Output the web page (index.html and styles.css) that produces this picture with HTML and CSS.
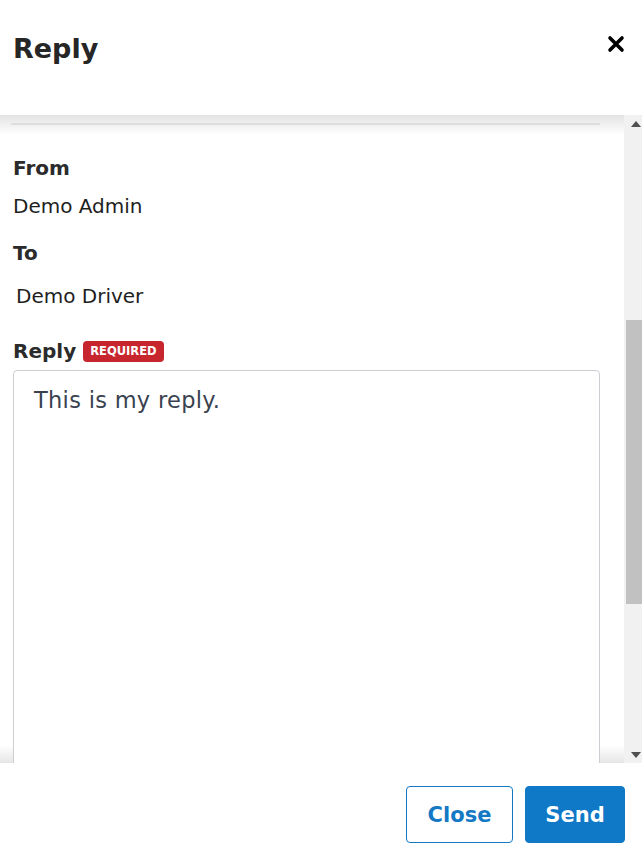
FILE: index.html
```html
<!DOCTYPE html>
<html lang="en">
<head>
    <meta charset="UTF-8">
    <meta name="viewport" content="width=device-width, initial-scale=1.0">
    <title>Reply</title>
    <link rel="stylesheet" href="styles.css">
</head>
<body>
    <div class="modal">
        <div class="modal-header">
            <h1>Reply</h1>
            <button class="close-icon" aria-label="Close">
                <svg width="18" height="18" viewBox="0 0 18 18">
                    <path d="M3 3 L15 15 M15 3 L3 15" stroke="#000" stroke-width="3.6" stroke-linecap="round"/>
                </svg>
            </button>
        </div>

        <div class="modal-body">
            <div class="modal-content">
                <hr class="divider">

                <div class="field field-from">
                    <label>From</label>
                    <div class="value">Demo Admin</div>
                </div>

                <div class="field field-to">
                    <label>To</label>
                    <div class="value indent">Demo Driver</div>
                </div>

                <div class="field field-reply">
                    <div class="label-row">
                        <label for="reply">Reply</label>
                        <span class="badge">Required</span>
                    </div>
                    <textarea id="reply">This is my reply.</textarea>
                </div>
            </div>

            <div class="scrollbar">
                <div class="arrow arrow-up"></div>
                <div class="track">
                    <div class="thumb"></div>
                </div>
                <div class="arrow arrow-down"></div>
            </div>
        </div>

        <div class="modal-footer">
            <button class="btn btn-outline">Close</button>
            <button class="btn btn-primary">Send</button>
        </div>
    </div>
</body>
</html>
```

FILE: styles.css
```css
html, body {
    margin: 0;
    padding: 0;
    height: 100%;
}

body {
    font-family: 'DejaVu Sans', Verdana, sans-serif;
    color: #222;
    background-color: #fff;
}

.modal {
    display: flex;
    flex-direction: column;
    height: 100vh;
}

.modal-header {
    height: 115px;
    box-sizing: border-box;
    padding: 33px 17px 0 13px;
    display: flex;
    justify-content: space-between;
    align-items: flex-start;
}

.modal-header h1 {
    margin: 0;
    font-size: 27px;
    line-height: 32px;
    font-weight: bold;
    color: #262626;
}

.close-icon {
    background: none;
    border: none;
    padding: 0;
    margin-top: 2px;
    cursor: pointer;
    line-height: 0;
}

.modal-body {
    flex: 1;
    display: flex;
    min-height: 0;
}

.modal-content {
    flex: 1;
    overflow: hidden;
    padding: 0 24px 0 13px;
    background: linear-gradient(#e3e3e3, #fff 20px, #fff calc(100% - 18px), #e6e6e6);
}

.divider {
    margin: 8px 0 0 -2px;
    border: none;
    height: 2px;
    background-color: #dedede;
}

.field label {
    display: block;
    font-size: 20px;
    line-height: 24px;
    font-weight: bold;
    color: #2b2b2b;
}

.value {
    font-size: 20px;
    line-height: 24px;
    color: #1e1e1e;
}

.value.indent {
    margin-left: 3px;
}

.field-from {
    margin-top: 31px;
}

.field-from .value {
    margin-top: 14px;
}

.field-to {
    margin-top: 23px;
}

.field-to .value {
    margin-top: 19px;
}

.field-reply {
    margin-top: 31px;
}

.label-row {
    display: flex;
    align-items: center;
    gap: 7px;
}

.badge {
    display: inline-block;
    background-color: #c8262f;
    color: #fff;
    font-size: 11.5px;
    font-weight: bold;
    text-transform: uppercase;
    line-height: 21px;
    padding: 0 7px;
    border-radius: 4px;
}

textarea {
    display: block;
    box-sizing: border-box;
    width: 100%;
    height: 420px;
    margin-top: 7px;
    padding: 14px 20px;
    border: 1px solid #cbcfd4;
    border-radius: 4px;
    font-family: inherit;
    font-size: 22.5px;
    line-height: 30px;
    letter-spacing: 0.3px;
    color: #3a4250;
    background-color: #fff;
    resize: none;
}

.scrollbar {
    width: 18px;
    background-color: #f1f1f1;
    display: flex;
    flex-direction: column;
}

.arrow {
    height: 17px;
    display: flex;
    justify-content: flex-end;
    align-items: center;
}

.arrow-up::before {
    content: "";
    margin-right: 1px;
    border-left: 5px solid transparent;
    border-right: 5px solid transparent;
    border-bottom: 6px solid #505050;
}

.arrow-down::before {
    content: "";
    margin-right: 1px;
    border-left: 5px solid transparent;
    border-right: 5px solid transparent;
    border-top: 6px solid #505050;
}

.track {
    flex: 1;
}

.thumb {
    margin: 188px 0 0 2px;
    height: 284px;
    background-color: #c1c1c1;
}

.modal-footer {
    height: 103px;
    box-sizing: border-box;
    padding: 23px 17px 0 0;
    display: flex;
    justify-content: flex-end;
    align-items: flex-start;
    gap: 12px;
}

.btn {
    font-family: inherit;
    font-size: 21px;
    font-weight: bold;
    height: 57px;
    border-radius: 4px;
    cursor: pointer;
}

.btn-outline {
    width: 107px;
    background-color: #fff;
    color: #1479c4;
    border: 1px solid #1479c4;
}

.btn-primary {
    width: 100px;
    background-color: #0f78c7;
    color: #fff;
    border: 1px solid #0f78c7;
}
```
